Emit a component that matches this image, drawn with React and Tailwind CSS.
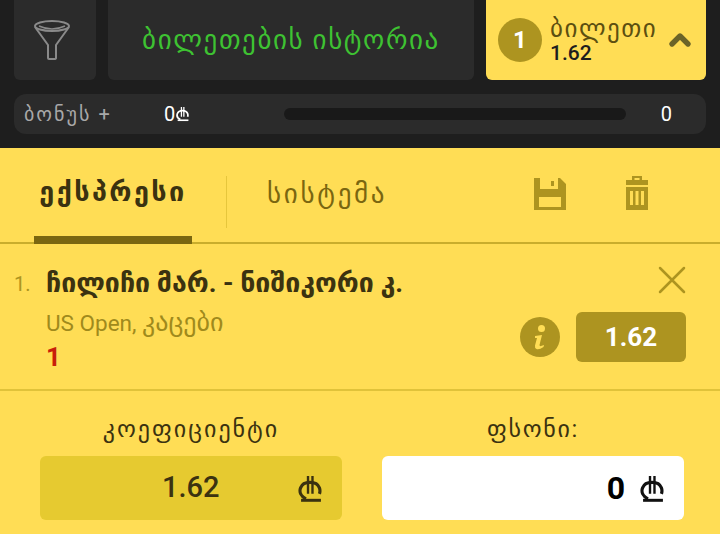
import { ChevronUp } from 'lucide-react';

const FONT = "font-['Roboto','DejaVu_Sans','Noto_Sans',sans-serif]";

function FilterIcon() {
    return (
        <svg width="38" height="42" viewBox="0 0 38 42" fill="none" stroke="#8a8a8a" strokeWidth="2">
            <ellipse cx="19" cy="7" rx="17" ry="5" />
            <path d="M2 8 L15 26 V39 Q15 40 16 40 H21 Q23 40 23 39 V26 L36 8" />
            <path d="M6 7 Q19 13 32 7" strokeWidth="1.5" />
        </svg>
    );
}

function SaveIcon() {
    return (
        <svg width="32" height="32" viewBox="0 0 32 32" fill="#ad9420">
            <path fillRule="evenodd" d="M0 0 H26 L32 6 V32 H0 Z M6 0 V11 H24 V0 Z M5 19 V29 H27 V19 Z M17 3 V8 H20 V3 Z" />
        </svg>
    );
}

function TrashIcon() {
    return (
        <svg width="24" height="34" viewBox="0 0 24 34" fill="#ad9420">
            <path fillRule="evenodd" d="M7 0 H17 V4 H23 V9 H1 V4 H7 Z M9.5 2 V4 H14.5 V2 Z M1 11 H23 V34 H1 Z M5 15 V29 H8 V15 Z M10.5 15 V29 H13.5 V15 Z M16 15 V29 H19 V15 Z" />
        </svg>
    );
}

function CloseIcon() {
    return (
        <svg width="28" height="28" viewBox="0 0 28 28" stroke="#ad9420" strokeWidth="2.5" strokeLinecap="round">
            <path d="M2 2 L26 26 M26 2 L2 26" />
        </svg>
    );
}

function LariIcon({ color = '#1e1e1e', size = 24 }) {
    return (
        <svg width={size} height={size * 1.2} viewBox="0 0 24 29" fill="none" stroke={color}>
            <path d="M8 25 C2.5 22.5 1 18 2.5 14 C4 10 8 8.5 12 8.5 C16 8.5 20 10 21.5 14 C22.2 16 22.2 18 21.5 20" strokeWidth="3.2" />
            <path d="M10 2 V20 M14.5 2 V20" strokeWidth="2.4" />
            <path d="M3 26.5 H23" strokeWidth="3" />
        </svg>
    );
}

function InfoIcon() {
    return (
        <svg width="40" height="40" viewBox="0 0 40 40">
            <circle cx="20" cy="20" r="20" fill="#ad9420" />
            <circle cx="21.5" cy="11.5" r="3.5" fill="#ffdd55" />
            <path d="M15 19 L22 18 L19.5 28 Q19.5 29.5 21 29 L24 28 L23.5 30 Q19 33 16.5 32 Q14.5 31 15 28.5 L17 21 L15 21 Z" fill="#ffdd55" />
        </svg>
    );
}

export default function App() {
    return (
        <div className={`w-[720px] h-[534px] overflow-hidden bg-[#ffdd55] ${FONT}`}>
            <div className="bg-[#1e1e1e] px-[14px] pb-[14px] h-[148px]">
                <div className="flex gap-3 h-20">
                    <div className="w-[82px] bg-[#2b2b2b] rounded-b-md flex items-center justify-center pr-[6px]">
                        <FilterIcon />
                    </div>
                    <div className="w-[366px] bg-[#2b2b2b] rounded-b-md flex items-center justify-center text-[#3ec232] text-[27px] tracking-[1.6px]">
                        ბილეთების ისტორია
                    </div>
                    <div className="w-[220px] bg-[#ffdd55] rounded-b-md flex items-center pl-3 pr-[10px]">
                        <div className="w-11 h-11 rounded-full bg-[#ad9420] text-white font-bold text-[24px] flex items-center justify-center">1</div>
                        <div className="ml-2 flex-1 leading-none">
                            <div className="text-[#5c4f10] text-[25px] tracking-[1.5px]">ბილეთი</div>
                            <div className="text-[#1e1e1e] text-[21px] font-medium mt-[2px]">1.62</div>
                        </div>
                        <ChevronUp size={32} strokeWidth={4} color="#6b6428" />
                    </div>
                </div>
                <div className="mt-[14px] h-10 bg-[#2b2b2b] rounded-xl flex items-center pl-[10px] pr-[34px]">
                    <div className="w-[140px] text-[#a8a8a8] text-[20px] tracking-[2px]">ბონუს +</div>
                    <div className="w-[120px] text-white text-[20px] flex items-center gap-[1px]">
                        0<LariIcon color="#ffffff" size={13} />
                    </div>
                    <div className="w-[342px] h-3 rounded-full bg-[#191919]"></div>
                    <div className="flex-1 text-right text-white text-[20px]">0</div>
                </div>
            </div>

            <div className="h-[96px] border-b-2 border-[#c9ad2c] flex items-start relative">
                <div className="ml-[34px] w-[158px] h-[96px] border-b-8 border-[#7a6610] flex items-center justify-center text-[#3b3210] text-[27px] font-bold tracking-[2.4px]">
                    ექსპრესი
                </div>
                <div className="ml-[34px] mt-[28px] w-px h-[52px] bg-[#e6c63c]"></div>
                <div className="ml-[40px] h-[92px] flex items-center text-[#7a6610] text-[27px] tracking-[2.7px]">სისტემა</div>
                <div className="ml-auto mr-[154px] h-[92px] flex items-center"><SaveIcon /></div>
                <div className="absolute left-[625px] top-[28px]"><TrashIcon /></div>
            </div>

            <div className="h-[147px] border-b-2 border-[#e0c23a] flex pl-[14px] pr-[34px]">
                <div className="w-[32px] pt-[30px] text-[#ad9420] text-[20px] leading-none">1.</div>
                <div className="flex-1 pt-[23px]">
                    <div className="text-[#3b3210] text-[26.7px] font-bold leading-[32px]">ჩილიჩი მარ. - ნიშიკორი კ.</div>
                    <div className="text-[#a08a1c] text-[22.5px] mt-[11px] leading-6">US Open, <span className="text-[26px]">კაცები</span></div>
                    <div className="text-[#c81e0a] text-[26px] font-bold leading-7 mt-[8px]">1</div>
                </div>
                <div className="flex flex-col items-end pt-[22px]">
                    <CloseIcon />
                    <div className="flex items-center gap-4 mt-[18px]">
                        <InfoIcon />
                        <div className="w-[110px] h-[50px] rounded-md bg-[#ad9420] text-white text-[26px] font-bold flex items-center justify-center">1.62</div>
                    </div>
                </div>
            </div>

            <div className="flex px-[40px] gap-10 pt-[24px]">
                <div className="w-[302px] shrink-0">
                    <div className="text-center text-[#3b3210] text-[24px] leading-7 tracking-[2px]">კოეფიციენტი</div>
                    <div className="mt-[13px] h-16 rounded-md bg-[#e6ca30] flex items-center pr-[20px] text-[#3b3210]">
                        <span className="ml-[122px] text-[29px] font-medium">1.62</span>
                        <span className="ml-auto"><LariIcon color="#3b3210" /></span>
                    </div>
                </div>
                <div className="w-[302px] shrink-0">
                    <div className="text-center text-[#3b3210] text-[24px] leading-7 tracking-[1.7px]">ფსონი:</div>
                    <div className="mt-[13px] h-16 rounded-md bg-white flex items-center justify-end pr-[20px] text-black gap-[15px]">
                        <span className="text-[32px] font-bold">0</span>
                        <LariIcon color="#111111" />
                    </div>
                </div>
            </div>
        </div>
    );
}
